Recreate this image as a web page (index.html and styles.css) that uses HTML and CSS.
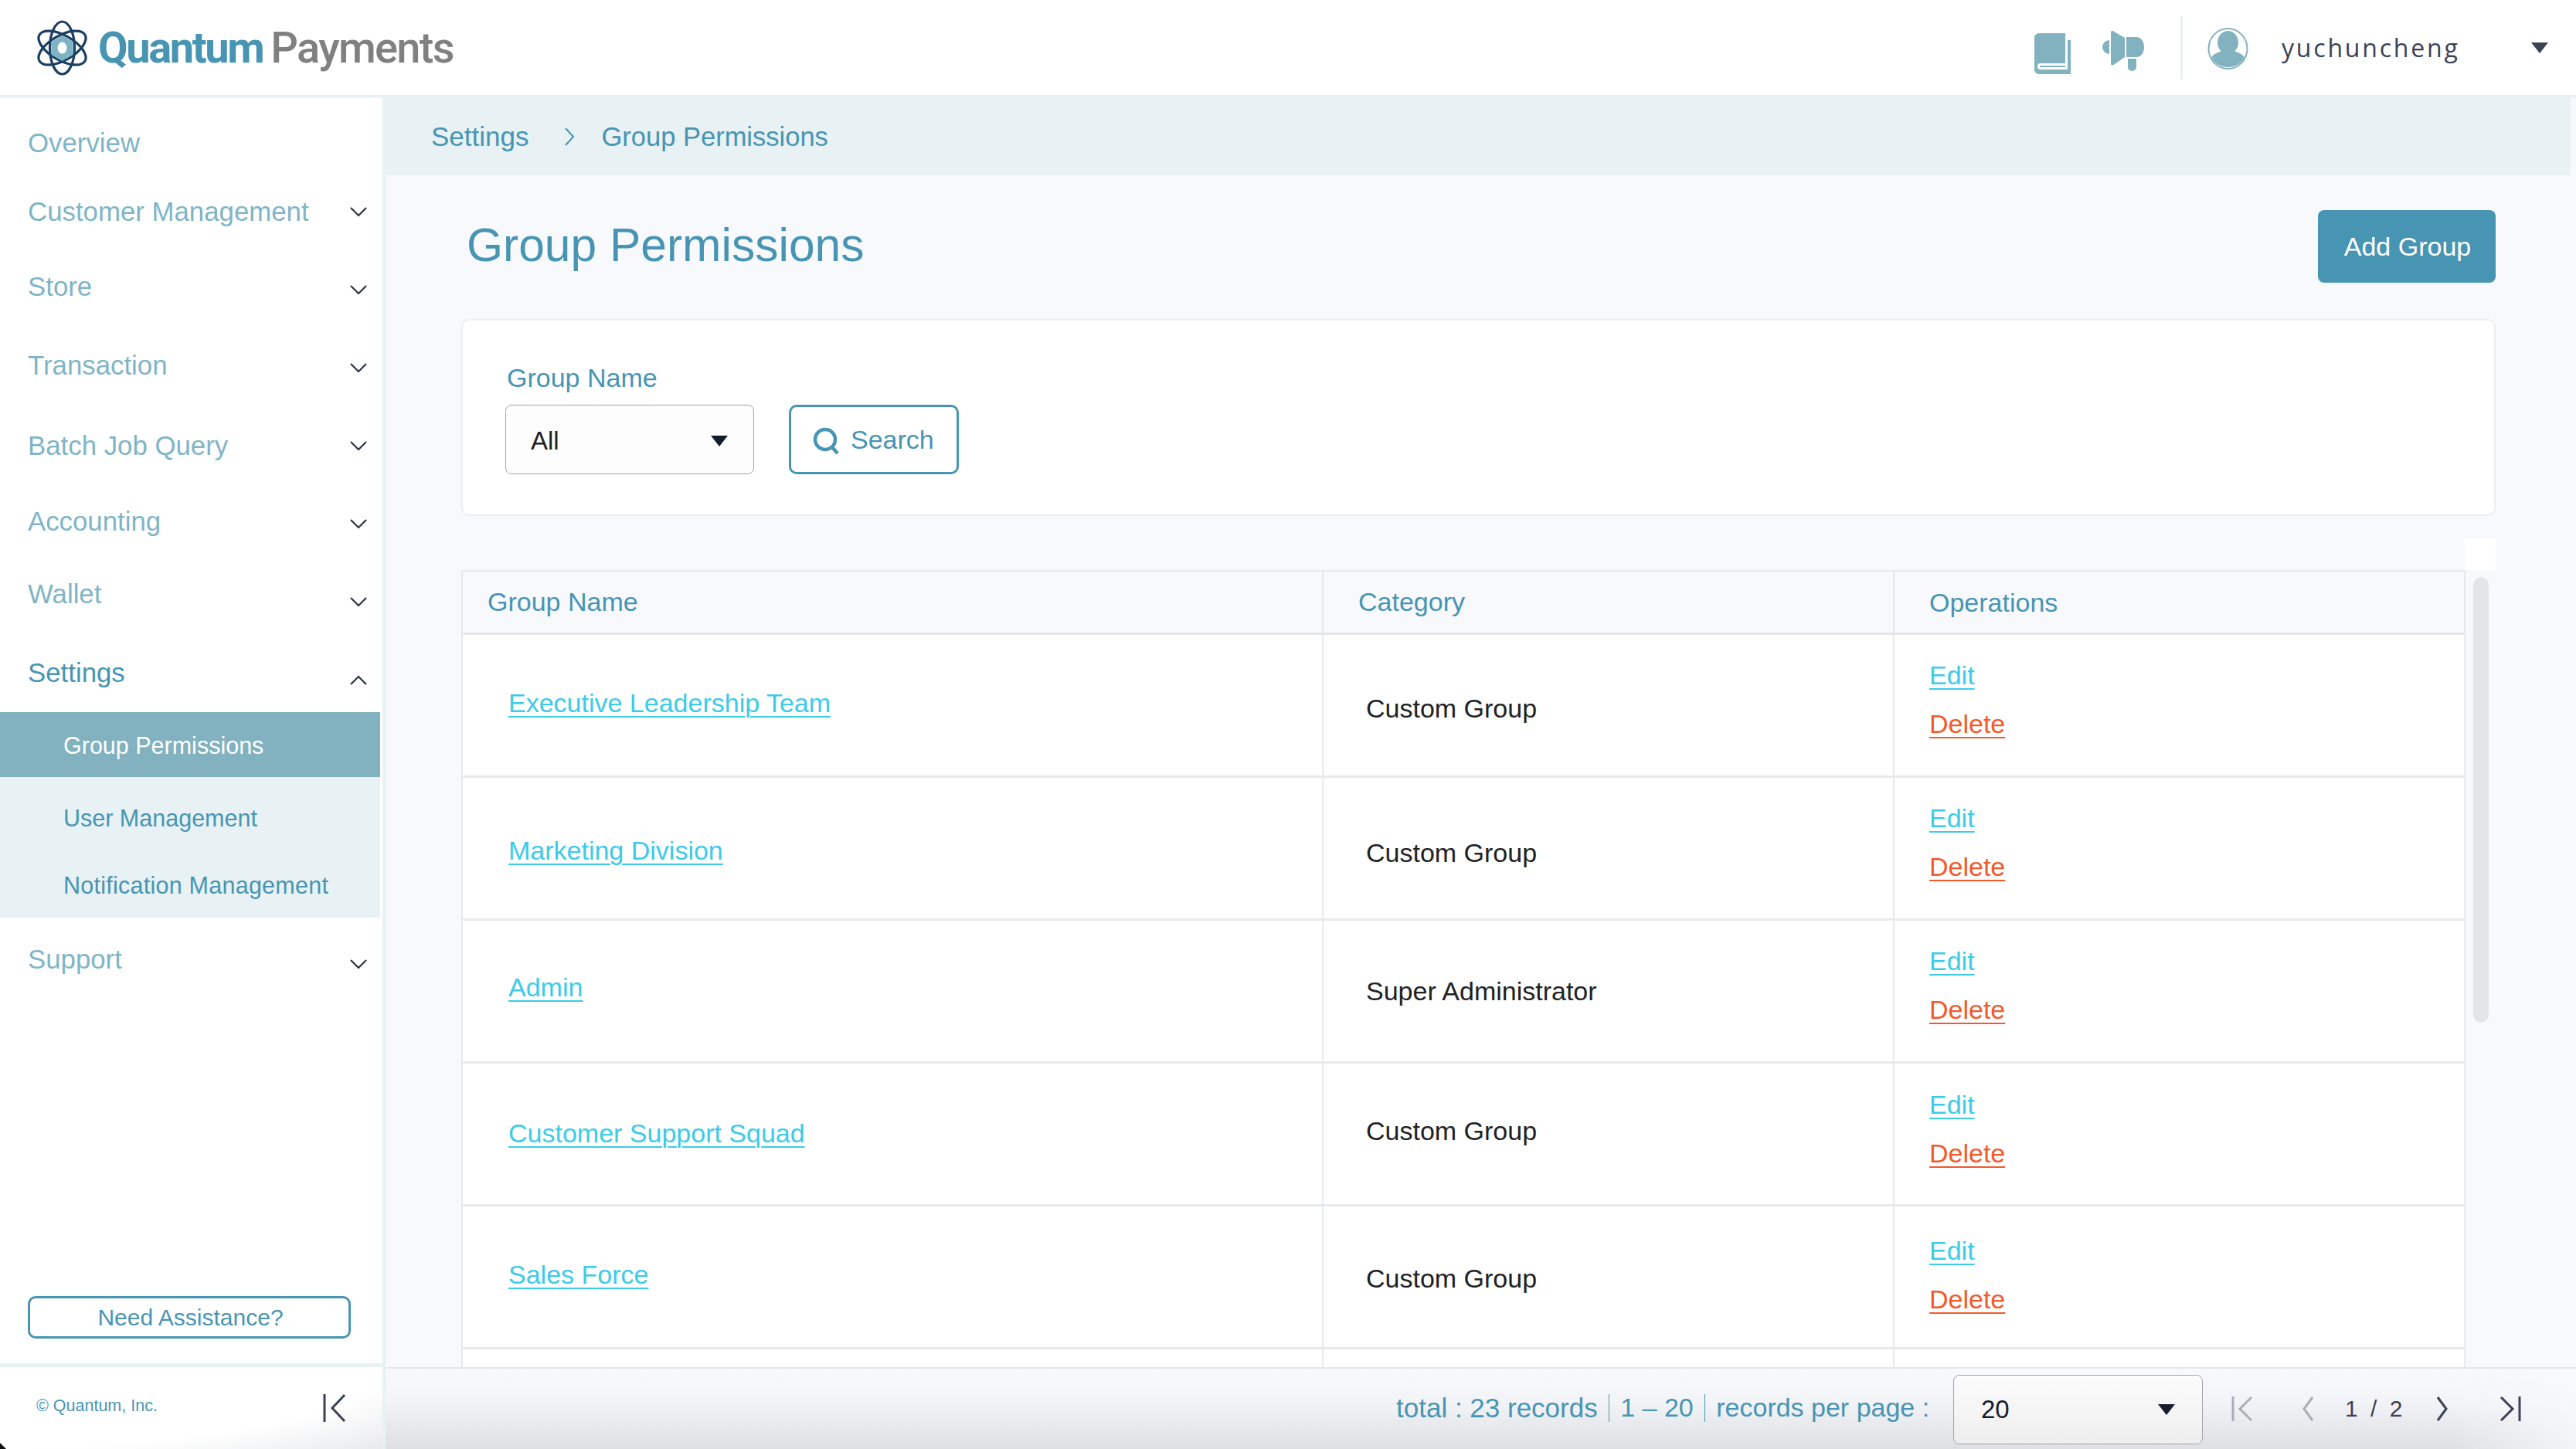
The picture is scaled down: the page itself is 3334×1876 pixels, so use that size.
FILE: index.html
```html
<!DOCTYPE html>
<html lang="en">
<head>
<meta charset="utf-8">
<title>Group Permissions</title>
<link rel="stylesheet" href="styles.css">
</head>
<body>
<svg class="defs" width="0" height="0" aria-hidden="true">
  <symbol id="chev-down" viewBox="0 0 24 14"><path d="M2 2l10 10L22 2" fill="none" stroke="#2b3240" stroke-width="2.2"/></symbol>
  <symbol id="chev-up" viewBox="0 0 24 14"><path d="M2 12L12 2l10 10" fill="none" stroke="#2b3240" stroke-width="2.2"/></symbol>
  <symbol id="caret" viewBox="0 0 22 14"><path d="M0 0h22L11 14z"/></symbol>
</svg>
<div class="app">
  <header class="topbar">
    <div class="brand">
      <svg class="logo-mark" viewBox="0 0 67 72">
        <g fill="none" stroke="#1b3f61" stroke-width="3.2">
          <ellipse cx="33.5" cy="36" rx="16" ry="34"/>
          <ellipse cx="33.5" cy="36" rx="16" ry="34" transform="rotate(60 33.5 36)"/>
          <ellipse cx="33.5" cy="36" rx="16" ry="34" transform="rotate(-60 33.5 36)"/>
        </g>
        <path d="M33.5 20l14 8v17l-14 8-14-8V28z" fill="#7fb3c4"/>
        <ellipse cx="33.5" cy="36" rx="6" ry="7.5" fill="#fff"/>
      </svg>
      <span class="brand-a">Quantum</span><span class="brand-b">Payments</span>
    </div>
    <div class="top-actions">
      <svg class="ico-book" viewBox="0 0 47 53"><path fill="#82b1bf" d="M6 0h34v39H8a4 4 0 0 0 0 8h35V9h4v44H6a6 6 0 0 1-6-6V6a6 6 0 0 1 6-6z"/><rect x="7" y="42" width="33" height="2" fill="#82b1bf"/></svg>
      <svg class="ico-horn" viewBox="0 0 54 52"><path fill="#82b1bf" d="M9 12v18a9 9 0 0 1 0-18zM11 2c0-2 2-2.500 3.500-1.500L29 9v25L14.500 44c-1.500 1-3.500.5-3.500-1.500zM31 8h13c6 0 10 6 10 13s-4 13-10 13H31zM33 36h11v11a5.500 5 0 0 1-11 0z"/></svg>
      <span class="divider"></span>
      <svg class="ico-user" viewBox="0 0 53 54"><ellipse cx="26.500" cy="27" rx="25" ry="26" fill="none" stroke="#82b1bf" stroke-width="2"/><ellipse cx="26.500" cy="19" rx="13.500" ry="15" fill="#82b1bf"/><path fill="#82b1bf" d="M5 38c4-5 9-6 13-8 4 4 13 4 17 0 4 2 9 3 13 8-4 8-12 13-21.500 13S9 46 5 38z"/></svg>
      <span class="username">yuchuncheng</span>
      <svg class="ico-caret user-caret"><use href="#caret"/></svg>
    </div>
  </header>

  <div class="workspace">
    <aside class="sidebar">
      <nav class="nav">
        <a class="nav-item nav-first"><span>Overview</span></a>
        <a class="nav-item"><span>Customer Management</span><svg class="chev"><use href="#chev-down"/></svg></a>
        <a class="nav-item nudge-4"><span>Store</span><svg class="chev"><use href="#chev-down"/></svg></a>
        <a class="nav-item nudge-3"><span>Transaction</span><svg class="chev"><use href="#chev-down"/></svg></a>
        <a class="nav-item"><span>Batch Job Query</span><svg class="chev"><use href="#chev-down"/></svg></a>
        <a class="nav-item nudge-3"><span>Accounting</span><svg class="chev"><use href="#chev-down"/></svg></a>
        <a class="nav-item nudge-10"><span>Wallet</span><svg class="chev"><use href="#chev-down"/></svg></a>
        <a class="nav-item nav-open nudge-5"><span>Settings</span><svg class="chev"><use href="#chev-up"/></svg></a>
        <div class="subnav">
          <a class="sub-item sub-active">Group Permissions</a>
          <a class="sub-item sub-mid">User Management</a>
          <a class="sub-item sub-end">Notification Management</a>
        </div>
        <a class="nav-item nav-last nudge-6"><span>Support</span><svg class="chev"><use href="#chev-down"/></svg></a>
      </nav>
      <button class="assist">Need Assistance?</button>
      <div class="side-foot">
        <span class="copyright">© Quantum, Inc.</span>
        <svg class="ico-collapse" viewBox="0 0 30 38"><path d="M2 1v36M28 2L12 19l16 17" fill="none" stroke="#3b4256" stroke-width="3"/></svg>
      </div>
    </aside>

    <main class="main">
      <div class="crumbs">
        <span>Settings</span>
        <svg class="crumb-sep" viewBox="0 0 14 26"><path d="M2 2l10 11L2 24" fill="none" stroke="#4795b3" stroke-width="2"/></svg>
        <span class="crumb-current">Group Permissions</span>
      </div>
      <div class="content">
        <div class="title-row">
          <h1>Group Permissions</h1>
          <button class="btn-primary">Add Group</button>
        </div>
        <section class="filter-card">
          <label class="field-label">Group Name</label>
          <div class="filter-row">
            <div class="select select-group"><span>All</span><svg class="ico-caret"><use href="#caret"/></svg></div>
            <button class="btn-search">
              <svg viewBox="0 0 34 36"><circle cx="16" cy="16" r="13" fill="none" stroke="#4795b3" stroke-width="4.5"/><path d="M25 26l7 8" stroke="#4795b3" stroke-width="4.5"/></svg>
              Search
            </button>
          </div>
        </section>
        <div class="table-wrap">
          <span class="scroll-cap"></span>
          <table class="grid">
            <colgroup><col class="c1"><col class="c2"><col class="c3"></colgroup>
            <thead><tr><th class="h1">Group Name</th><th class="h2">Category</th><th class="h3">Operations</th></tr></thead>
            <tbody>
              <tr><td class="name"><a>Executive Leadership Team</a></td><td class="cat">Custom Group</td><td class="ops"><a class="edit">Edit</a><a class="del">Delete</a></td></tr>
              <tr><td class="name"><a>Marketing Division</a></td><td class="cat">Custom Group</td><td class="ops"><a class="edit">Edit</a><a class="del">Delete</a></td></tr>
              <tr><td class="name"><a>Admin</a></td><td class="cat">Super Administrator</td><td class="ops"><a class="edit">Edit</a><a class="del">Delete</a></td></tr>
              <tr><td class="name"><a>Customer Support Squad</a></td><td class="cat">Custom Group</td><td class="ops"><a class="edit">Edit</a><a class="del">Delete</a></td></tr>
              <tr><td class="name"><a>Sales Force</a></td><td class="cat">Custom Group</td><td class="ops"><a class="edit">Edit</a><a class="del">Delete</a></td></tr>
              <tr><td class="name"></td><td class="cat"></td><td class="ops"></td></tr>
            </tbody>
          </table>
          <div class="scroll-track"><span class="scroll-thumb"></span></div>
        </div>
      </div>
      <footer class="pager">
        <span class="totals">total : 23 records<i></i><b>1 – 20</b><i></i><b>records per page :</b></span>
        <div class="select select-size"><span>20</span><svg class="ico-caret"><use href="#caret"/></svg></div>
        <div class="pages">
          <svg class="pg pg-off" viewBox="0 0 28 34"><path d="M2 1v32M26 2L11 17l15 15" fill="none" stroke="#a9adb8" stroke-width="3"/></svg>
          <svg class="pg-s pg-off" viewBox="0 0 16 34"><path d="M14 2L3 17l11 15" fill="none" stroke="#a9adb8" stroke-width="3"/></svg>
          <span class="page-no">1 / 2</span>
          <svg class="pg-s" viewBox="0 0 16 34"><path d="M2 2l11 15L2 32" fill="none" stroke="#3b4256" stroke-width="3"/></svg>
          <svg class="pg" viewBox="0 0 28 34"><path d="M26 1v32M2 2l15 15L2 32" fill="none" stroke="#3b4256" stroke-width="3"/></svg>
        </div>
      </footer>
    </main>
  </div>
  <span class="corner"></span>
</div>
</body>
</html>
```
FILE: styles.css
```css
* { box-sizing: border-box; }
html, body { margin: 0; padding: 0; }
body { font-family: "Liberation Sans", Arial, sans-serif; color: #222; background: #fff; }
.defs { position: absolute; }
.app { position: relative; width: 3334px; height: 1876px; overflow: hidden; display: flex; flex-direction: column; }

/* top bar */
.topbar { height: 127px; flex: none; background: #fff; border-bottom: 4px solid #e8f1f3; display: flex; align-items: center; justify-content: space-between; padding: 0 36px 0 47px; }
.brand { display: flex; align-items: center; font-family: Roboto, sans-serif; font-size: 56px; letter-spacing: -1.7px; height: 100%; }
.logo-mark { width: 67px; height: 72px; margin-right: 13px; }
.brand-a { color: #4795b3; font-weight: 700; letter-spacing: -2.4px; margin-right: 10px; }
.brand-b { color: #808080; font-weight: 500; }
.top-actions { display: flex; align-items: center; }
.ico-book { width: 47px; height: 53px; margin-top: 16px; }
.ico-horn { width: 54px; height: 52px; margin-left: 41px; margin-top: 8px; }
.divider { width: 3px; height: 82px; background: #e8f1f3; margin-left: 47px; }
.ico-user { width: 53px; height: 54px; margin-left: 32px; margin-top: 2px; }
.username { font-family: "Open Sans", sans-serif; font-size: 32px; letter-spacing: 2.8px; color: #3b4256; margin-left: 43px; width: 323px; }
.ico-caret { width: 22px; height: 14px; fill: #171c2c; flex: none; }
.user-caret { fill: #3b4256; }

/* layout */
.workspace { flex: 1; display: flex; min-height: 0; }

/* sidebar */
.sidebar { width: 495px; flex: none; background: #fff; display: flex; flex-direction: column; }
.nav { flex: 1; display: flex; flex-direction: column; }
.nav-item { display: flex; align-items: center; justify-content: space-between; height: 101px; padding: 0 19px 0 36px; font-size: 34.8px; color: #7fb5c6; flex: none; }
.nav-first { height: 96px; padding-top: 20px; }
.nav-open { color: #4795b3; height: 93px; }
.nav-last { height: 106px; margin-top: 7px; }
.chev { width: 24px; height: 14px; flex: none; }
.nudge-3 span { margin-bottom: 6px; }
.nudge-4 span { margin-bottom: 8px; }
.nudge-5 span { margin-bottom: 10px; }
.nudge-6 span { margin-bottom: 12px; }
.nudge-10 span { margin-bottom: 20px; }
.nav-open .chev { margin-top: 10px; }
.subnav { width: 492px; background: #e8f1f3; display: flex; flex-direction: column; height: 266px; flex: none; }
.sub-item { font-size: 30.5px; color: #4795b3; padding-left: 82px; display: flex; align-items: center; }
.sub-active { background: #82b1bf; color: #fff; height: 84px; padding-top: 2px; }
.sub-mid { height: 106px; }
.sub-end { height: 76px; padding-bottom: 8px; letter-spacing: .25px; }
.assist { margin: 0 0 32px 36px; width: 418px; height: 55px; flex: none; background: #fff; border: 3px solid #4795b3; border-radius: 10px; color: #4795b3; font: 30px "Liberation Sans", sans-serif; padding: 0 0 0 3px; }
.side-foot { height: 111px; flex: none; border-top: 5px solid #e8f1f3; display: flex; align-items: center; justify-content: space-between; padding: 0 47px; background: radial-gradient(ellipse at 0% 0%, #fff 70%, #e9eaed 100%); }
.copyright { font-size: 21.5px; color: #4795b3; margin-bottom: 6px; }
.ico-collapse { width: 30px; height: 38px; }

/* main */
.main { flex: 1; min-width: 0; background: #f8f9fd; display: flex; flex-direction: column; border-left: 4px solid #e8f1f3; }
.crumbs { height: 100px; flex: none; background: #e8f1f3; display: flex; align-items: center; padding-left: 59px; margin-right: 7px; font-size: 35px; color: #4795b3; }
.crumb-sep { width: 14px; height: 26px; margin: 0 34px 0 46px; }
.crumb-current { font-size: 34.5px; }
.content { flex: 1; min-height: 0; overflow: hidden; padding: 45px 104px 0 98px; }
.title-row { display: flex; align-items: center; justify-content: space-between; height: 94px; }
h1 { margin: 0 0 4px 7px; font-size: 60.5px; font-weight: 400; color: #4795b3; }
.btn-primary { width: 230px; height: 94px; background: #4795b3; border: 0; border-radius: 8px; color: #fff; font: 34px "Liberation Sans", sans-serif; padding: 0 0 0 2px; }

/* filter */
.filter-card { margin-top: 47px; height: 255px; background: #fff; border: 2px solid #eceef2; border-radius: 10px; padding: 54px 0 0 55px; }
.field-label { display: block; font-size: 34px; line-height: 40px; color: #4795b3; margin-left: 2px; }
.filter-row { display: flex; gap: 45px; margin-top: 15px; }
.select { display: flex; align-items: center; justify-content: space-between; border: 1px solid #a0a4ab; border-radius: 8px; background: #fdfdfe; font-size: 33px; }
.select-group { width: 322px; height: 90px; padding: 3px 33px 0 32px; }
.btn-search { width: 220px; height: 90px; background: #fff; border: 3px solid #4795b3; border-radius: 10px; display: flex; align-items: center; gap: 14px; padding: 0 0 0 27px; color: #4795b3; font: 34px "Liberation Sans", sans-serif; }
.btn-search svg { width: 36px; height: 36px; flex: none; margin-top: 3px; }

/* table */
.table-wrap { position: relative; margin-top: 70px; display: flex; align-items: flex-start; }
.scroll-cap { position: absolute; left: 2593px; top: -40px; width: 40px; height: 40px; background: #fff; }
.grid { width: 2592px; flex: none; table-layout: fixed; border-collapse: collapse; background: #fff; font-size: 34px; }
.c1 { width: 1114px; }
.c2, .c3 { width: 739px; }
.grid th { height: 81px; background: #f8f9fd; font-weight: 400; text-align: left; color: #4795b3; border: 2px solid #e6e7ea; border-bottom-width: 3px; padding: 0; }
.grid .h1 { padding-left: 32px; }
.grid .h2 { padding-left: 45px; }
.grid .h3 { padding: 3px 0 0 45px; }
.grid td { height: 185px; border: 2px solid #e8e9ec; border-bottom-width: 3px; padding: 0; vertical-align: middle; }
.grid td.name { padding-left: 59px; }
.name a { color: #3ccbe8; text-decoration: underline; text-underline-offset: 5px; text-decoration-thickness: 2px; }
.grid td.cat { padding-left: 55px; color: #222; }
.grid td.ops { padding-left: 45px; }
.ops a { display: block; width: fit-content; text-decoration: underline; text-underline-offset: 5px; text-decoration-thickness: 2px; line-height: 40px; }
.edit { color: #3ccbe8; }
.del { color: #f4592a; margin-top: 23px; }
tbody tr:nth-child(1) .name { padding-bottom: 4px; }
tbody tr:nth-child(2) .name { padding-top: 8px; }
tbody tr:nth-child(3) .name { padding-bottom: 8px; }
tbody tr:nth-child(5) .name { padding-bottom: 4px; }
tbody tr:nth-child(1) .cat { padding-top: 10px; }
tbody tr:nth-child(2) .cat { padding-top: 14px; }
tbody tr:nth-child(3) .cat { padding-top: 2px; }
tbody tr:nth-child(4) .cat { padding-bottom: 6px; }
tbody tr:nth-child(5) .cat { padding-top: 6px; }
tbody tr:nth-child(1) .ops, tbody tr:nth-child(2) .ops, tbody tr:nth-child(3) .ops { padding-bottom: 15px; }
tbody tr:nth-child(4) .ops { padding-bottom: 12px; }
tbody tr:nth-child(5) .ops { padding-bottom: 4px; }
.scroll-track { margin-left: 10px; width: 21px; height: 586px; padding-top: 9px; }
.scroll-thumb { display: block; width: 20px; height: 577px; background: #e4e5ea; border-radius: 10px; }

/* pager */
.pager { height: 106px; flex: none; border-top: 2px solid #e6e7ea; display: flex; align-items: center; padding-left: 1308px; background: linear-gradient(90deg, rgba(248,249,253,0) 94%, rgba(248,249,253,.8) 100%), linear-gradient(180deg, #f8f9fd 0%, #f3f4f8 40%, #dedfe3 100%); }
.totals { font-size: 35px; color: #4795b3; width: 721px; display: flex; align-items: center; white-space: pre; margin-bottom: 3px; }
.totals b { font-size: 34px; font-weight: 400; }
.totals i { display: inline-block; width: 1.5px; height: 36px; background: #4795b3; margin: 0 14px; }
.select-size { width: 323px; height: 90px; padding: 0 35px 0 35px; background: linear-gradient(180deg, #fcfcfd, #eeeeef); font-size: 33px; color: #171c2c; margin-top: 2px; }
.pages { display: flex; align-items: center; margin-left: 37px; color: #3b4256; }
.pg { width: 28px; height: 34px; }
.pg-s { width: 16px; height: 34px; }
.pg + .pg-s { margin-left: 63px; }
.page-no { font-size: 30px; margin: 0 44px 0 40px; white-space: pre; word-spacing: 8px; }
.pg-s + .pg { margin-left: 66px; }
.corner { position: absolute; left: 0; bottom: 0; width: 0; height: 0; border-left: 8px solid #111; border-top: 8px solid transparent; }
```
